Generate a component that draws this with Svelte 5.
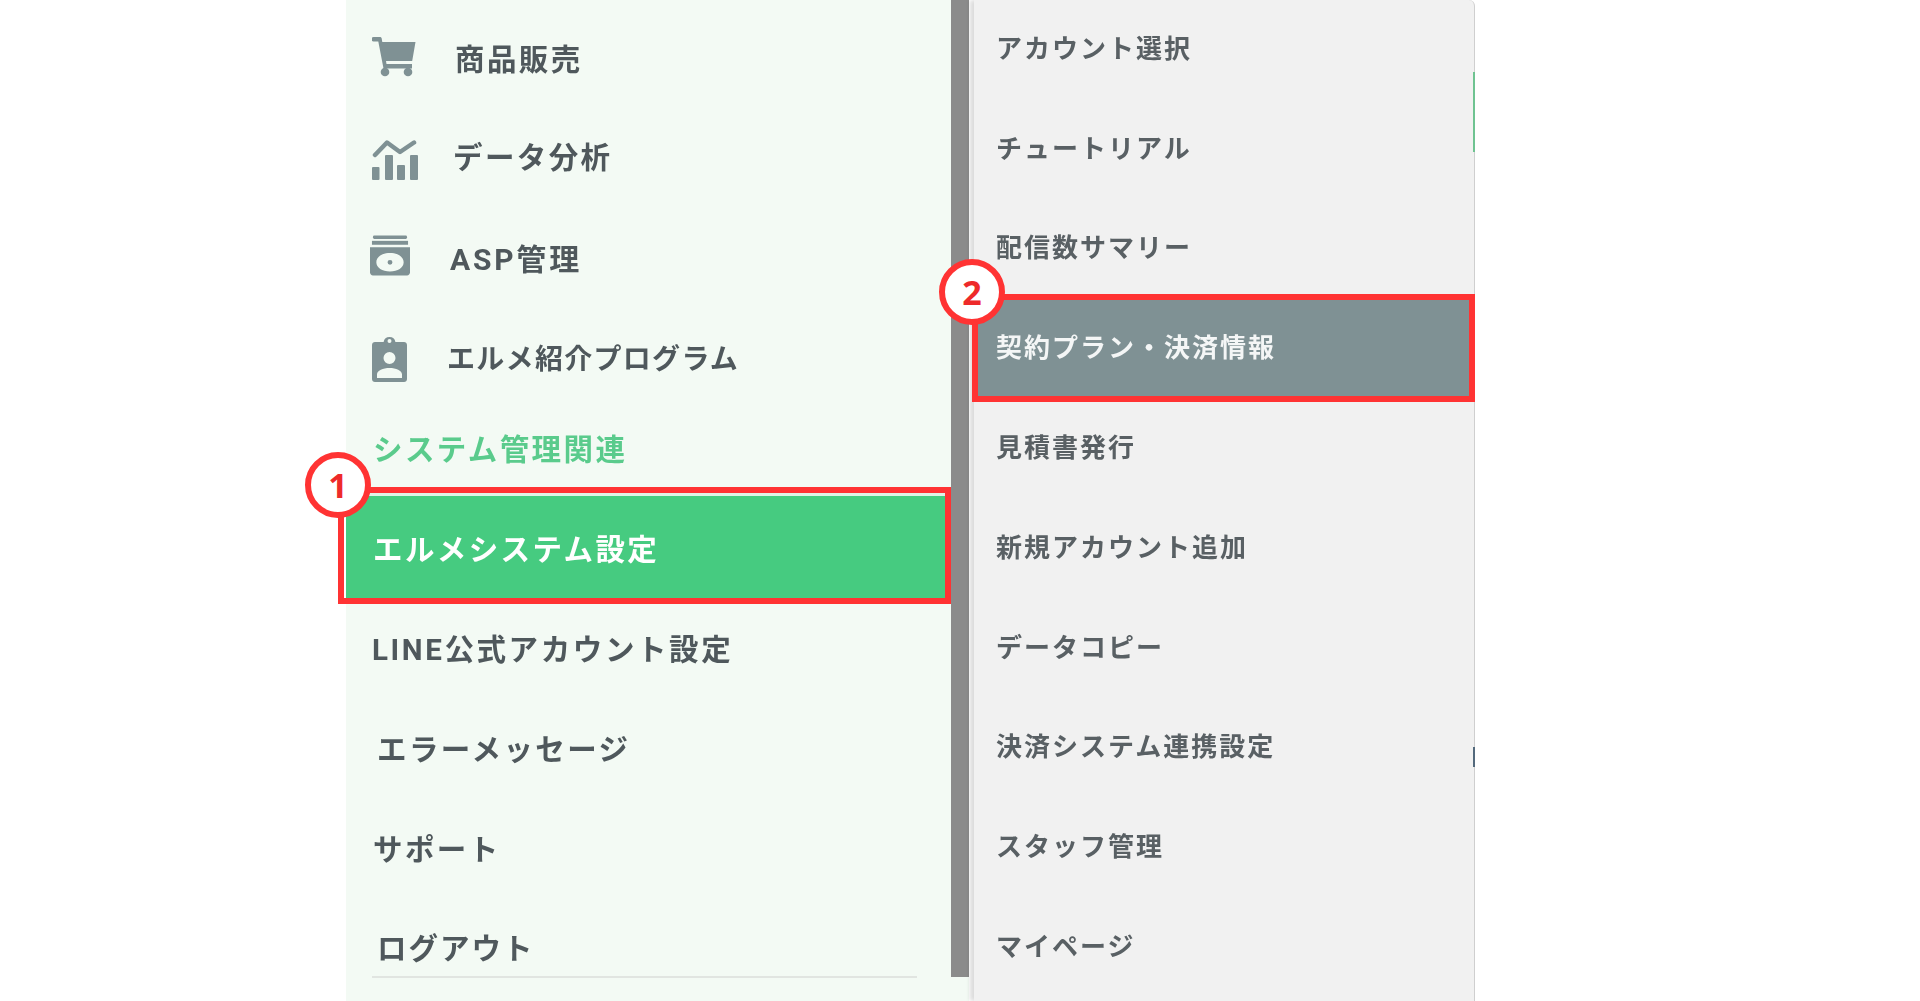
<script>
  const mainItems = [
    { id: 'cart', label: '商品販売' },
    { id: 'chart', label: 'データ分析' },
    { id: 'disc', label: 'ASP管理' },
    { id: 'badge', label: 'エルメ紹介プログラム' },
    { id: 'head', label: 'システム管理関連' },
    { id: 'active', label: 'エルメシステム設定' },
    { id: 'line', label: 'LINE公式アカウント設定' },
    { id: 'error', label: 'エラーメッセージ' },
    { id: 'support', label: 'サポート' },
    { id: 'logout', label: 'ログアウト' }
  ];
  const subItems = ['アカウント選択', 'チュートリアル', '配信数サマリー', '契約プラン・決済情報', '見積書発行', '新規アカウント追加', 'データコピー', '決済システム連携設定', 'スタッフ管理', 'マイページ'];
</script>

<div class="page">
  <nav class="main">
    <ul class="main-list">
      {#each mainItems as item}
        <li class="row {item.id}">
          {#if item.id === 'cart'}
            <svg class="ico" viewBox="0 0 44 40"><path d="M1.500 0H8c.8 0 1.500.6 1.700 1.400L10.300 5H43.500l-3.300 19H14l.5 3H40v4.500H11.500L6.300 4.500H1.500a2.250 2.250 0 0 1 0-4.500z"/><circle cx="13" cy="35" r="4.300"/><circle cx="36" cy="35" r="4.300"/></svg>
          {:else if item.id === 'chart'}
            <svg class="ico" viewBox="0 0 46 40"><rect x="0" y="27" width="7.500" height="13" rx="1"/><rect x="13" y="15" width="8" height="25" rx="1"/><rect x="25" y="25" width="8" height="15" rx="1"/><rect x="38" y="15" width="8" height="25" rx="1"/><path d="M3 15 15 2.500l13 9.500L42 2.500" fill="none" stroke="#7f9194" stroke-width="4.500" stroke-linecap="round" stroke-linejoin="round"/></svg>
          {:else if item.id === 'disc'}
            <svg class="ico" viewBox="0 0 41 42"><rect x="3" y="1" width="35" height="3.500" rx="1.500"/><rect x="2" y="6.500" width="37" height="4"/><path fill-rule="evenodd" d="M0 13h41v26c0 1.600-1.400 3-3 3H3c-1.600 0-3-1.400-3-3zM20.500 19C12.500 19 6.500 23 6.500 28.500S12.500 38 20.500 38s14-4 14-9.500-6-9.500-14-9.500zM20.500 26a2.500 2.500 0 1 1 0 5 2.500 2.500 0 0 1 0-5z"/></svg>
          {:else if item.id === 'badge'}
            <svg class="ico" viewBox="0 0 35 46"><path fill-rule="evenodd" d="M3 6h8.600a6 6 0 0 1 11.800 0H32c1.700 0 3 1.300 3 3v34c0 1.700-1.300 3-3 3H3c-1.700 0-3-1.300-3-3V9c0-1.700 1.300-3 3-3zM17.500 3a2 2 0 1 0 0 4 2 2 0 0 0 0-4zM17.500 16a6 6 0 1 0 0 12 6 6 0 0 0 0-12zM5 42h25v-3.500c0-4-6-6.500-12.500-6.500S5 34.500 5 38.500z"/></svg>
          {/if}
          <span class="text">{item.label}</span>
          {#if item.id === 'active'}
            <span class="mark"></span>
            <span class="num">1</span>
          {/if}
        </li>
      {/each}
    </ul>
    <div class="rule"></div>
  </nav>
  <div class="thumb-track"><div class="thumb"></div></div>
  <aside class="sub">
    <ul class="sub-list">
      {#each subItems as label, i}
        <li class="sub-row" class:current={i === 3}>
          <span class="text">{label}</span>
          {#if i === 3}
            <span class="mark"></span>
            <span class="num">2</span>
          {/if}
        </li>
      {/each}
    </ul>
    <span class="edge-green"></span>
    <span class="edge-dark"></span>
  </aside>
</div>

<style>
  :global(body) { margin: 0; background: #fff; }
  .page {
    display: flex;
    height: 1001px;
    overflow: hidden;
    padding-left: 346px;
    font-family: Roboto, "Noto Sans CJK JP", sans-serif;
  }
  ul { list-style: none; margin: 0; padding: 0; }
  .text { filter: blur(0.7px); white-space: nowrap; }

  .main {
    width: 605px;
    background: #f3faf4;
    display: flex;
    flex-direction: column;
    color: #4f585c;
    font-weight: 700;
    font-size: 29.500px;
    letter-spacing: 2.400px;
  }
  .main-list { padding-top: 8.500px; }
  .row { display: flex; align-items: center; position: relative; height: 100px; padding-left: 26px; }
  .ico { fill: #7f9194; flex: none; filter: blur(0.6px); }

  .cart { height: 97px; }
  .cart .ico { width: 44px; height: 40px; margin-right: 39px; }
  .chart { height: 99px; }
  .chart .ico { width: 46px; height: 40px; margin-right: 35px; margin-top: 10px; }
  .disc { height: 105px; }
  .disc .ico { width: 40px; height: 42px; margin-left: -2px; margin-right: 40px; margin-bottom: 4px; }
  .disc .text { font-size: 30px; letter-spacing: 2.800px; }
  .badge { height: 91px; }
  .badge .ico { width: 35px; height: 46px; margin-right: 40px; margin-top: 8px; }
  .badge .text { font-size: 28px; letter-spacing: 1.300px; margin-top: 4px; }
  .head { height: 92.500px; color: #5acb8c; padding-left: 27px; }
  .active { height: 102px; margin-top: 3px; color: #fff; background: #46cb80; width: 599px; box-sizing: border-box; padding-left: 27px; }
  .active::before { content: ""; position: absolute; left: 0; right: 0; top: -3px; height: 3px; background: #dff3e6; }
  .line { height: 98px; padding-left: 26px; }
  .line .text { letter-spacing: 2.600px; }
  .error { height: 101px; padding-left: 31px; }
  .support { height: 99px; padding-left: 27px; }
  .logout { padding-left: 31px; }
  .logout .text { letter-spacing: 2px; }

  .rule { width: 545px; height: 2px; margin-left: 26px; margin-top: -20px; background: #e1e5e1; }

  .thumb-track { width: 18px; background: #f3faf4; flex: none; }
  .thumb { height: 977px; background: #8b8b8b; }

  .sub {
    position: relative;
    width: 500px;
    margin-left: 5px;
    flex: none;
    background: #f1f1f1;
    border-right: 1px solid #cfcfcf;
    border-top-right-radius: 6px;
    box-shadow: -4px 0 4px rgba(0, 0, 0, 0.14);
    color: #596064;
    font-weight: 700;
    font-size: 26px;
    letter-spacing: 2px;
  }
  .sub-row { position: relative; display: flex; align-items: center; height: 99.800px; padding-left: 22px; }
  .sub-list { margin-top: -3.500px; }
  .current { color: #f4f6f6; background: #7f9194; }

  .mark { position: absolute; box-sizing: border-box; border: 6px solid #ff3333; pointer-events: none; }
  .active .mark { left: -8px; right: -6px; top: -9px; bottom: -6px; }
  .current .mark { left: -2px; right: -1px; top: -2px; bottom: -6px; }

  .num {
    position: absolute;
    width: 66px;
    height: 66px;
    box-sizing: border-box;
    border: 6px solid #ff3333;
    border-radius: 50%;
    background: #fff;
    color: #ee2a2a;
    display: flex;
    align-items: center;
    justify-content: center;
    letter-spacing: 0;
    font: 700 34px "Open Sans", sans-serif;
  }
  .active .num { left: -41px; top: -44.500px; }
  .current .num { left: -35px; top: -36.500px; }

  .edge-green { position: absolute; top: 72px; right: -1px; width: 2px; height: 80px; background: #6fc391; }
  .edge-dark { position: absolute; top: 747px; right: -1px; width: 2px; height: 20px; background: #53697c; }
</style>
